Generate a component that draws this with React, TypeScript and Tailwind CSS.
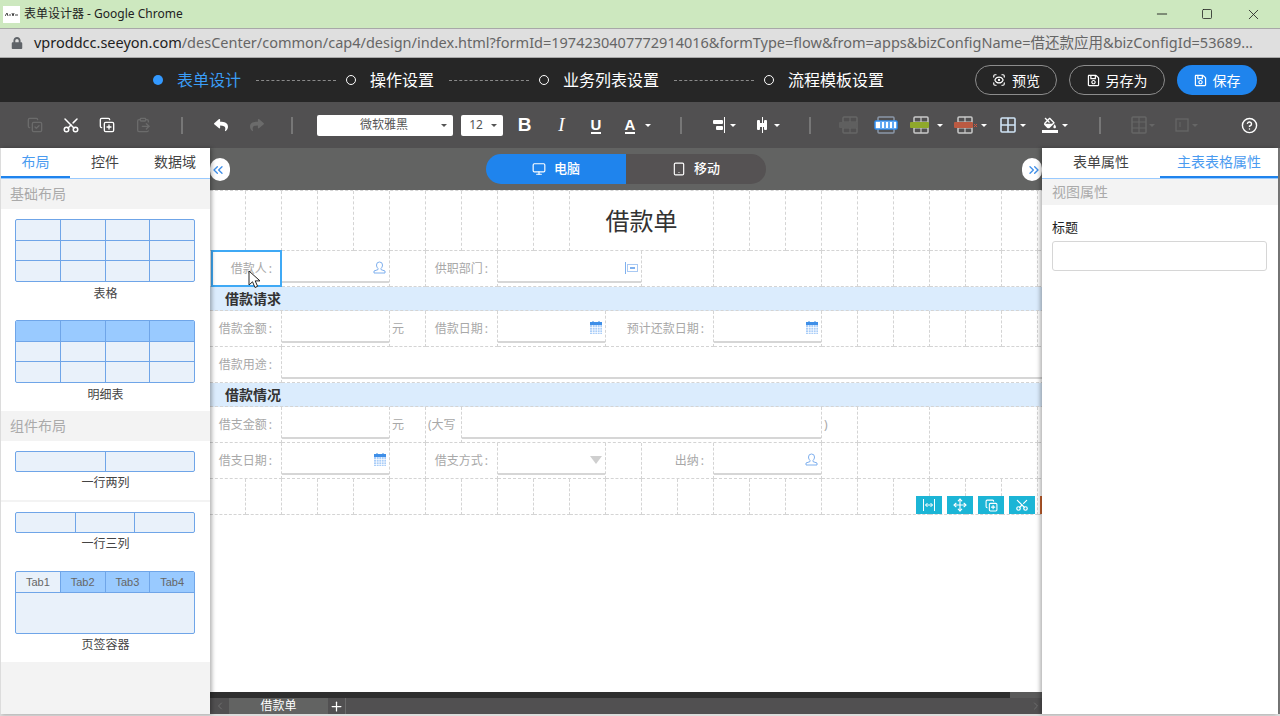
import type { ReactNode } from "react";
import { Monitor, Tablet, Scissors, CopyPlus, CopyCheck, ClipboardPaste, ChevronsLeft, ChevronsRight, ChevronLeft, ChevronRight, Minus, Square, X, CircleHelp, ScanEye, Plus, Move } from "lucide-react";
import { FaLock, FaReply, FaShare, FaRegSave, FaFillDrip } from "react-icons/fa";

const SPAN: Record<number, string> = {
  1: "col-span-1",
  2: "col-span-2",
  3: "col-span-3",
  4: "col-span-4",
  10: "col-span-10",
  22: "col-span-22",
};

const dashed = "border-r border-b border-dashed border-[#d4d4d4]";

const Caret = () => <span className="ml-[4px] h-0 w-0 border-x-[3px] border-t-[3px] border-x-transparent border-t-white" />;

const Sep = ({ w }: { w: string }) => (
  <div className={`flex shrink-0 justify-center ${w}`}>
    <div className="h-[17px] w-[2px] bg-[#777]" />
  </div>
);

const Slot = ({ w, children, caret }: { w: string; children: ReactNode; caret?: boolean }) => (
  <div className={`flex shrink-0 items-center justify-center ${w}`}>
    {children}
    {caret && <Caret />}
  </div>
);

// table style icons of the toolbar
const GridIcon = ({ band, stroke = "#c9c9c9", mark }: { band?: string; stroke?: string; mark?: string }) => (
  <svg width="24" height="18" viewBox="0 0 24 18" fill="none">
    <rect x="5" y="1" width="14" height="16" rx="1" stroke={stroke} strokeWidth="1.5" />
    <path d="M5 6h14M5 12h14M12 1v16" stroke={stroke} strokeWidth="1.2" />
    {band && <rect x="1" y="6" width="19" height="6" rx="1" fill={band} />}
    {mark && <path d="M21 8l3 3M24 8l-3 3" stroke={mark} strokeWidth="1" />}
  </svg>
);

const ColsIcon = () => (
  <svg width="24" height="18" viewBox="0 0 24 18" fill="none">
    <rect x="4" y="1" width="16" height="16" rx="1" stroke="#8b97a8" strokeWidth="1.5" />
    <rect x="1" y="5" width="22" height="8" rx="1" fill="#fff" stroke="#2e8cf0" strokeWidth="1.5" />
    <path d="M7 6v6M11 6v6M15 6v6M19 6v6" stroke="#2e8cf0" strokeWidth="1.5" />
  </svg>
);

const Toolbar = () => (
  <div className="flex h-[46px] items-center bg-[#515051] pl-[17px]">
    <Slot w="w-[36px]"><CopyCheck size={16} color="#6b6b6b" /></Slot>
    <Slot w="w-[36px]"><Scissors size={18} color="#fff" className="-rotate-90" /></Slot>
    <Slot w="w-[36px]"><CopyPlus size={16} color="#fff" /></Slot>
    <Slot w="w-[36px]"><ClipboardPaste size={16} color="#6b6b6b" /></Slot>
    <Sep w="w-[42px]" />
    <Slot w="w-[36px]"><FaReply size={14} color="#fff" /></Slot>
    <Slot w="w-[35px]"><FaShare size={14} color="#6b6b6b" /></Slot>
    <Sep w="w-[36px]" />
    <div className="ml-[7px] flex h-[21px] w-[136px] shrink-0 items-center rounded-[2px] bg-white pr-[6px]">
      <span className="flex-1 pl-[10px] text-center text-[12px] text-[#555]">微软雅黑</span>
      <span className="h-0 w-0 border-x-[3px] border-t-[3px] border-x-transparent border-t-[#555]" />
    </div>
    <div className="ml-[8px] flex h-[21px] w-[42px] shrink-0 items-center rounded-[2px] bg-white pr-[6px]">
      <span className="flex-1 text-center text-[12px] text-[#555]">12</span>
      <span className="h-0 w-0 border-x-[3px] border-t-[3px] border-x-transparent border-t-[#555]" />
    </div>
    <Slot w="w-[43px]"><span className="text-[19px] font-bold text-white [font-family:'Liberation_Sans',sans-serif]">B</span></Slot>
    <Slot w="w-[31px]"><span className="text-[19px] italic text-white [font-family:'Liberation_Serif',serif]">I</span></Slot>
    <Slot w="w-[38px]"><span className="border-b-2 border-white text-[15px] leading-[15px] font-bold text-white [font-family:'Liberation_Sans',sans-serif]">U</span></Slot>
    <Slot w="w-[46px]" caret><span className="mr-[6px] border-b-2 border-white text-[15px] leading-[15px] font-bold text-white [font-family:'Liberation_Sans',sans-serif]">A</span></Slot>
    <Sep w="w-[39px]" />
    <Slot w="w-[47px]" caret>
      <svg width="14" height="16" viewBox="0 0 14 16"><rect x="1" y="3" width="10" height="4" rx="1" fill="#fff" /><rect x="4" y="9" width="7" height="4" rx="1" fill="#fff" /><path d="M12.5 0v16" stroke="#fff" /></svg>
    </Slot>
    <Slot w="w-[40px]" caret>
      <svg width="15" height="16" viewBox="0 0 15 16"><rect x="3" y="6" width="9" height="4" fill="#fff" /><rect x="2" y="3" width="3" height="10" rx="1" fill="#fff" /><rect x="9" y="3" width="3" height="10" rx="1" fill="#fff" /><path d="M7.5 0v16" stroke="#fff" /></svg>
    </Slot>
    <Sep w="w-[46px]" />
    <Slot w="w-[33px]"><GridIcon stroke="#666" band="#5f5f5f" /></Slot>
    <Slot w="w-[39px]"><ColsIcon /></Slot>
    <Slot w="w-[42px]" caret><GridIcon band="#8fa82b" /></Slot>
    <Slot w="w-[46px]" caret><GridIcon band="#bb5a42" mark="#d8553c" /></Slot>
    <Slot w="w-[40px]" caret>
      <svg width="16" height="16" viewBox="0 0 16 16" fill="none"><rect x="1" y="1" width="14" height="14" rx="1" stroke="#cfe3f5" strokeWidth="1.6" /><path d="M8 1v14M1 8h14" stroke="#cfe3f5" strokeWidth="1.6" /></svg>
    </Slot>
    <Slot w="w-[44px]" caret>
      <div className="flex flex-col items-center gap-[1px]">
        <FaFillDrip size={12} color="#fff" />
        <div className="h-[3px] w-[16px] bg-white" />
      </div>
    </Slot>
    <Sep w="w-[46px]" />
    <Slot w="w-[36px]"><GridIcon stroke="#666" /><span className="ml-[-2px] h-0 w-0 border-x-[3px] border-t-[3px] border-x-transparent border-t-[#666]" /></Slot>
    <Slot w="w-[55px]">
      <svg width="14" height="14" viewBox="0 0 14 14" fill="none"><rect x="1" y="1" width="12" height="12" stroke="#666" strokeWidth="1.3" /><path d="M5 4v5" stroke="#666" /></svg>
      <span className="ml-[3px] h-0 w-0 border-x-[3px] border-t-[3px] border-x-transparent border-t-[#666]" />
    </Slot>
    <div className="ml-auto flex w-[62px] justify-center"><CircleHelp size={17} color="#fff" /></div>
  </div>
);

const Step = ({ label, active }: { label: string; active?: boolean }) => (
  <div className="flex items-center">
    {active ? (
      <span className="h-[10px] w-[10px] rounded-full bg-[#3399ff]" />
    ) : (
      <span className="h-[10px] w-[10px] rounded-full border border-white" />
    )}
    <span className={`ml-[14px] text-[16px] ${active ? "text-[#3b9df5]" : "text-white"}`}>{label}</span>
  </div>
);

const Dash = () => <div className="ml-[15px] mr-[10px] w-[80px] border-t border-dashed border-[#8a8a8a]" />;

const StepsBar = () => (
  <div className="flex h-[44px] items-center bg-[#262626] pl-[153px] pr-[23px]">
    <Step label="表单设计" active />
    <Dash />
    <Step label="操作设置" />
    <Dash />
    <Step label="业务列表设置" />
    <Dash />
    <Step label="流程模板设置" />
    <div className="ml-auto flex items-center gap-[12px] text-[14px] text-white">
      <button className="flex h-[30px] w-[82px] items-center justify-center gap-[6px] rounded-full border border-[#8c8c8c]">
        <ScanEye size={14} />预览
      </button>
      <button className="flex h-[30px] w-[96px] items-center justify-center gap-[6px] rounded-full border border-[#8c8c8c]">
        <FaRegSave size={13} />另存为
      </button>
      <button className="flex h-[30px] w-[80px] items-center justify-center gap-[6px] rounded-full bg-[#1f84ed]">
        <FaRegSave size={13} />保存
      </button>
    </div>
  </div>
);

const Preview = ({ rows, tabs, className = "" }: { rows: { w: string; blue?: boolean; label?: string }[][]; tabs?: boolean; className?: string }) => (
  <div className={`ml-[14px] mr-[15px] flex flex-col overflow-hidden rounded-[2px] border border-[#6fa5e8] bg-[#e9f1fa] ${className}`}>
    {rows.map((cells, i) => (
      <div key={i} className={`flex ${tabs && i === 0 ? "h-[20px]" : "flex-1"} ${i > 0 ? "border-t border-[#6fa5e8]" : ""}`}>
        {cells.map((c, j) => (
          <div
            key={j}
            className={`flex items-center justify-center text-[11px] text-[#666] [font-family:'Liberation_Sans',sans-serif] ${c.w} ${j > 0 ? "border-l border-[#6fa5e8]" : ""} ${c.blue ? "bg-[#99caff]" : ""}`}
          >
            {c.label}
          </div>
        ))}
      </div>
    ))}
  </div>
);

const four = (blue = false) => [{ w: "flex-1", blue }, { w: "flex-1", blue }, { w: "flex-1", blue }, { w: "flex-1", blue }];

const PanelHead = ({ label, h = "h-[30px]" }: { label: string; h?: string }) => (
  <div className={`flex items-center bg-[#f3f3f3] pb-[2px] pl-[9px] text-[14px] text-[#aaa] ${h}`}>{label}</div>
);

const Caption = ({ label, className }: { label: string; className: string }) => (
  <div className={`h-[16px] text-center text-[12px] leading-[16px] text-[#444] ${className}`}>{label}</div>
);

const LeftPanel = () => (
  <div className="relative z-10 flex w-[210px] flex-col border-l border-[#dcdcdc] bg-white shadow-[2px_0_4px_rgba(0,0,0,0.3)]">
    <div className="flex h-[31px] border-b border-[#99caff] text-center text-[14px] leading-[28px] text-[#444]">
      <div className="w-[69px] border-b-2 border-[#1f84ed] text-[#4a9bf0]">布局</div>
      <div className="w-[70px]">控件</div>
      <div className="w-[70px]">数据域</div>
    </div>
    <PanelHead label="基础布局" />
    <Preview className="mt-[10px] h-[63px]" rows={[four(), four(), four()]} />
    <Caption label="表格" className="mt-[4px]" />
    <Preview className="mt-[18px] h-[63px]" rows={[four(true), four(), four()]} />
    <Caption label="明细表" className="mt-[4px]" />
    <PanelHead label="组件布局" h="mt-[8px] h-[30px]" />
    <Preview className="mt-[10px] h-[21px]" rows={[[{ w: "flex-1" }, { w: "flex-1" }]]} />
    <Caption label="一行两列" className="mt-[3px]" />
    <div className="mt-[9px] h-[2px] bg-[#f3f3f3]" />
    <Preview className="mt-[10px] h-[21px]" rows={[[{ w: "flex-1" }, { w: "flex-1" }, { w: "flex-1" }]]} />
    <Caption label="一行三列" className="mt-[3px]" />
    <Preview
      tabs
      className="mt-[19px] h-[63px]"
      rows={[
        [
          { w: "flex-1", label: "Tab1" },
          { w: "flex-1", label: "Tab2", blue: true },
          { w: "flex-1", label: "Tab3", blue: true },
          { w: "flex-1", label: "Tab4", blue: true },
        ],
        [{ w: "flex-1" }],
      ]}
    />
    <Caption label="页签容器" className="mt-[3px]" />
    <div className="mt-[9px] flex-1 bg-[#f3f3f3]" />
  </div>
);

const RightPanel = () => (
  <div className="relative z-10 flex w-[236px] flex-col bg-white shadow-[-2px_0_4px_rgba(0,0,0,0.3)]">
    <div className="flex h-[31px] border-b border-[#99caff] text-center text-[14px] leading-[28px] text-[#444]">
      <div className="w-[118px]">表单属性</div>
      <div className="w-[118px] border-b-2 border-[#1f84ed] text-[#4a9bf0]">主表表格属性</div>
    </div>
    <PanelHead label="视图属性" h="h-[26px] pl-[10px]" />
    <div className="mt-[13px] pl-[10px] text-[13px] leading-[18px] text-[#222]">标题</div>
    <div className="ml-[10px] mt-[5px] h-[30px] w-[215px] rounded-[3px] border border-[#d6d6d6]" />
  </div>
);

const Blank = ({ span = 1 }: { span?: number }) => <div className={`${SPAN[span]} ${dashed}`} />;

const Label = ({ text, span = 2 }: { text: string; span?: number }) => (
  <div className={`${SPAN[span]} ${dashed} flex items-center justify-end pr-[9px] text-[12px] text-[#a8a8a8]`}>
    {text}
    <span className="ml-[2px]">:</span>
  </div>
);

const Field = ({ span = 3, icon }: { span?: number; icon?: ReactNode }) => (
  <div className={`${SPAN[span]} ${dashed} pb-[3px]`}>
    <div className="flex h-full items-center justify-end border-b-2 border-[#d6d6d6] pr-[3px] pt-[3px]">{icon}</div>
  </div>
);

const Person = (
  <svg width="13" height="13" viewBox="0 0 13 13" fill="none">
    <path d="M6.5 1a3 3 0 0 1 3 3c0 1.4-.7 2.8-1.5 3.4v1.2l4 1.4v2H1v-2l4-1.4V7.400C4.200 6.800 3.500 5.400 3.500 4a3 3 0 0 1 3-3z" stroke="#7fb0ee" />
  </svg>
);
const Calendar = (
  <svg width="12" height="13" viewBox="0 0 12 13">
    <rect x="0" y="1" width="12" height="12" fill="#a9cdf8" />
    <rect x="0" y="1" width="12" height="3" fill="#3f8fe8" />
    <path d="M3 0v2M9 0v2" stroke="#3f8fe8" />
    <path d="M0 6.500h12M0 9h12M0 11.500h12M2.500 4v9M5 4v9M7.500 4v9M10 4v9" stroke="#fff" strokeWidth=".7" />
  </svg>
);
const Dept = (
  <svg width="13" height="12" viewBox="0 0 13 12" fill="none">
    <path d="M.5 0v12" stroke="#7fb0ee" />
    <rect x="2.500" y="2.500" width="10" height="7" stroke="#a9c9f3" />
    <rect x="5" y="5" width="5" height="2" fill="#7fb0ee" />
  </svg>
);

const Singles = ({ n }: { n: number }) => (
  <>
    {Array.from({ length: n }).map((_, i) => (
      <Blank key={i} />
    ))}
  </>
);

const Row = ({ h = "h-[36px]", children }: { h?: string; children: ReactNode }) => (
  <div className={`grid w-[864px] grid-cols-[repeat(24,36px)] ${h}`}>{children}</div>
);

const Section = ({ text }: { text: string }) => (
  <div className="flex h-[24px] w-[864px] items-center border-b border-dashed border-[#d4d4d4] bg-[#dbecfd] pl-[15px] text-[14px] font-bold text-[#333]">
    {text}
  </div>
);

const TextCell = ({ text }: { text: string }) => (
  <div className={`col-span-1 ${dashed} flex items-center pl-[2px] text-[12px] text-[#a8a8a8]`}>{text}</div>
);

const Tool = ({ children, bg = "bg-[#1cb5d6]" }: { children?: ReactNode; bg?: string }) => (
  <div className={`flex h-[18px] w-[26px] items-center justify-center ${bg}`}>{children}</div>
);

const FormGrid = () => (
  <div className="relative w-[864px] border-t border-dashed border-[#d4d4d4] bg-white">
    <Row h="h-[60px]">
      <Singles n={10} />
      <div className={`col-span-4 ${dashed} flex items-center justify-center text-[24px] text-[#333]`}>借款单</div>
      <Singles n={10} />
    </Row>
    <Row>
      <div className={`relative col-span-2 ${dashed} flex items-center justify-end pr-[9px] text-[12px] text-[#a8a8a8]`}>
        借款人<span className="ml-[2px]">:</span>
        <div className="absolute -top-px bottom-[-1px] left-px right-[-1px] border-2 border-[#3fa9f5]" />
        <svg className="absolute left-[38px] top-[19px] z-20" width="14" height="19" viewBox="0 0 14 19">
          <path d="M1 1v14l3.500-3.200L7 17.500l2.600-1.200-2.400-5.400H12z" fill="#fff" stroke="#222" strokeWidth="1" />
        </svg>
      </div>
      <Field icon={Person} />
      <Blank />
      <Label text="供职部门" />
      <Field span={4} icon={Dept} />
      <Blank span={2} />
      <Blank span={3} />
      <Singles n={7} />
    </Row>
    <Section text="借款请求" />
    <Row>
      <Label text="借款金额" />
      <Field />
      <TextCell text="元" />
      <Label text="借款日期" />
      <Field icon={Calendar} />
      <Label text="预计还款日期" span={3} />
      <Field icon={Calendar} />
      <Singles n={7} />
    </Row>
    <Row>
      <Label text="借款用途" />
      <Field span={22} />
    </Row>
    <Section text="借款情况" />
    <Row>
      <Label text="借支金额" />
      <Field />
      <TextCell text="元" />
      <TextCell text="(大写" />
      <Field span={10} />
      <TextCell text=")" />
      <Blank span={2} />
      <Blank span={3} />
      <Blank />
    </Row>
    <Row>
      <Label text="借支日期" />
      <Field icon={Calendar} />
      <Blank />
      <Label text="借支方式" />
      <Field icon={<span className="h-0 w-0 border-x-[6px] border-t-[8px] border-x-transparent border-t-[#cfcfcf]" />} />
      <Blank />
      <Label text="出纳" />
      <Field icon={Person} />
      <Blank />
      <Blank span={2} />
      <Blank span={3} />
      <Blank />
    </Row>
    <Row>
      <Singles n={24} />
    </Row>
    <div className="absolute bottom-px left-[706px] flex gap-[5px]">
      <Tool>
        <svg width="14" height="12" viewBox="0 0 14 12" fill="none" stroke="#fff"><path d="M1.500 0v12M12.500 0v12M3.500 6h7M5.500 4l-2 2 2 2M8.500 4l2 2-2 2" /></svg>
      </Tool>
      <Tool><Move size={14} color="#fff" /></Tool>
      <Tool><CopyPlus size={13} color="#fff" /></Tool>
      <Tool><Scissors size={14} color="#fff" className="-rotate-90" /></Tool>
      <Tool bg="bg-[#c9622e]" />
    </div>
  </div>
);

const Center = () => (
  <div className="relative flex w-[832px] flex-col overflow-hidden">
    <div className="relative flex h-[42px] items-center justify-center bg-[#626362]">
      <div className="flex h-[30px] w-[280px] overflow-hidden rounded-full text-[13px] font-medium text-white">
        <div className="flex w-[140px] items-center justify-center gap-[8px] bg-[#1f84ed]">
          <Monitor size={14} />电脑
        </div>
        <div className="flex w-[140px] items-center justify-center gap-[8px] bg-[#555253]">
          <Tablet size={14} />移动
        </div>
      </div>
      <div className="absolute left-0 top-[10px] flex h-[23px] w-[20px] items-center justify-center rounded-full bg-white pr-[4px]">
        <ChevronsLeft size={16} color="#3f8fe8" />
      </div>
      <div className="absolute right-0 top-[10px] flex h-[23px] w-[20px] items-center justify-center rounded-full bg-white pl-[4px]">
        <ChevronsRight size={16} color="#3f8fe8" />
      </div>
    </div>
    <div className="flex-1 overflow-hidden bg-white">
      <FormGrid />
    </div>
    <div className="flex h-[6px] bg-[#2f2f2f]">
      <div className="w-[800px]" />
      <div className="flex-1 bg-[#5a5a5a]" />
    </div>
    <div className="flex h-[16px] items-center bg-[#515051] text-white">
      <div className="flex w-[19px] justify-center"><ChevronLeft size={12} color="#6f6f6f" /></div>
      <div className="flex h-full w-[99px] items-center justify-center bg-[#626362] text-[12px]">借款单</div>
      <div className="flex h-full w-[18px] items-center justify-center border-r border-[#6a6a6a]"><Plus size={15} /></div>
      <div className="ml-auto flex w-[12px] justify-center"><ChevronRight size={12} color="#6f6f6f" /></div>
    </div>
  </div>
);

export default function App() {
  return (
    <div className="flex h-[716px] w-[1280px] flex-col overflow-hidden bg-white [font-family:'Noto_Sans','Noto_Sans_CJK_SC',sans-serif]">
      <div className="flex h-[28px] items-center bg-[#cde8bf] pl-[3px] pr-[18px]">
        <div className="flex h-[17px] w-[17px] items-center justify-center bg-white">
          <svg width="13" height="5" viewBox="0 0 13 5"><path d="M0 4L2 1l1 3M4 3h2M7 1l1 3 1-3M10 3h3" stroke="#444" strokeWidth="1" fill="none" /></svg>
        </div>
        <span className="ml-[4px] text-[12px] text-[#222]">表单设计器 - Google Chrome</span>
        <div className="ml-auto flex items-center text-[#222]">
          <Minus size={16} strokeWidth={1.4} />
          <Square size={12} strokeWidth={1.6} className="ml-[31px]" />
          <X size={17} strokeWidth={1.2} className="ml-[32px]" />
        </div>
      </div>
      <div className="flex h-[30px] items-center border-y border-[#a8a8a8] bg-[#dfdfdf] pl-[11px]">
        <FaLock size={12} color="#5f6368" />
        <span className="ml-[11px] whitespace-nowrap text-[14.5px] text-[#666]">
          <span className="text-[#222]">vproddcc.seeyon.com</span>/desCenter/common/cap4/design/index.html?formId=1974230407772914016&amp;formType=flow&amp;from=apps&amp;bizConfigName=借还款应用&amp;bizConfigId=53689...
        </span>
      </div>
      <StepsBar />
      <Toolbar />
      <div className="flex min-h-0 flex-1 border-b-2 border-[#dcdcdc]">
        <LeftPanel />
        <Center />
        <RightPanel />
        <div className="w-[2px] bg-[#777]" />
      </div>
    </div>
  );
}
